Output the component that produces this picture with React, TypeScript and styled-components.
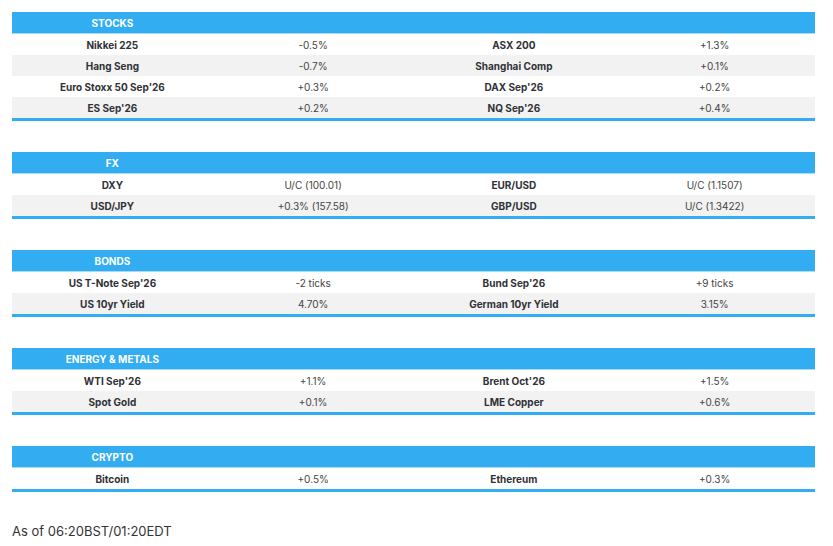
import React from "react";
import styled, { createGlobalStyle } from "styled-components";

const GlobalStyle = createGlobalStyle`
  html, body {
    margin: 0;
    padding: 0;
    background: #ffffff;
  }
  body {
    font-family: Inter, "Liberation Sans", Arial, sans-serif;
  }
`;

const Page = styled.div`
  padding: 12px 18px 0 12px;
  display: flex;
  flex-direction: column;
  gap: 31px;
`;

const Table = styled.table`
  width: 803px;
  border-collapse: separate;
  border-spacing: 0;
  table-layout: fixed;
  font-size: 10px;
  color: #333333;
`;

const HeadCell = styled.th`
  height: 21px;
  padding: 0;
  background: #33adf1;
  border-bottom: 1px solid #a9dbf7;
  color: #ffffff;
  font-weight: 700;
  text-align: center;
  box-sizing: content-box;
`;

const Row = styled.tr`
  &:nth-child(even) td {
    background: #f2f2f2;
  }
  &:last-child td {
    border-bottom: 3px solid #33adf1;
  }
`;

const Cell = styled.td<{ $label?: boolean }>`
  height: 21px;
  padding: 0;
  box-sizing: content-box;
  text-align: center;
  font-weight: ${(p) => (p.$label ? 700 : 400)};
  color: ${(p) => (p.$label ? "#2f3136" : "#444444")};
  background: #ffffff;
`;

const Footer = styled.div`
  font-size: 13px;
  color: #333333;
`;

type Item = [string, string];
type Section = { title: string; rows: [Item, Item][] };

const sections: Section[] = [
  {
    title: "STOCKS",
    rows: [
      [["Nikkei 225", "-0.5%"], ["ASX 200", "+1.3%"]],
      [["Hang Seng", "-0.7%"], ["Shanghai Comp", "+0.1%"]],
      [["Euro Stoxx 50 Sep'26", "+0.3%"], ["DAX Sep'26", "+0.2%"]],
      [["ES Sep'26", "+0.2%"], ["NQ Sep'26", "+0.4%"]],
    ],
  },
  {
    title: "FX",
    rows: [
      [["DXY", "U/C (100.01)"], ["EUR/USD", "U/C (1.1507)"]],
      [["USD/JPY", "+0.3% (157.58)"], ["GBP/USD", "U/C (1.3422)"]],
    ],
  },
  {
    title: "BONDS",
    rows: [
      [["US T-Note Sep'26", "-2 ticks"], ["Bund Sep'26", "+9 ticks"]],
      [["US 10yr Yield", "4.70%"], ["German 10yr Yield", "3.15%"]],
    ],
  },
  {
    title: "ENERGY & METALS",
    rows: [
      [["WTI Sep'26", "+1.1%"], ["Brent Oct'26", "+1.5%"]],
      [["Spot Gold", "+0.1%"], ["LME Copper", "+0.6%"]],
    ],
  },
  {
    title: "CRYPTO",
    rows: [[["Bitcoin", "+0.5%"], ["Ethereum", "+0.3%"]]],
  },
];

const MarketTable = ({ section }: { section: Section }) => (
  <Table>
    <thead>
      <tr>
        <HeadCell>{section.title}</HeadCell>
        <HeadCell />
        <HeadCell />
        <HeadCell />
      </tr>
    </thead>
    <tbody>
      {section.rows.map(([a, b], i) => (
        <Row key={i}>
          <Cell $label>{a[0]}</Cell>
          <Cell>{a[1]}</Cell>
          <Cell $label>{b[0]}</Cell>
          <Cell>{b[1]}</Cell>
        </Row>
      ))}
    </tbody>
  </Table>
);

export default function App() {
  return (
    <>
      <GlobalStyle />
      <Page>
        {sections.map((s) => (
          <MarketTable key={s.title} section={s} />
        ))}
        <Footer>As of 06:20BST/01:20EDT</Footer>
      </Page>
    </>
  );
}
